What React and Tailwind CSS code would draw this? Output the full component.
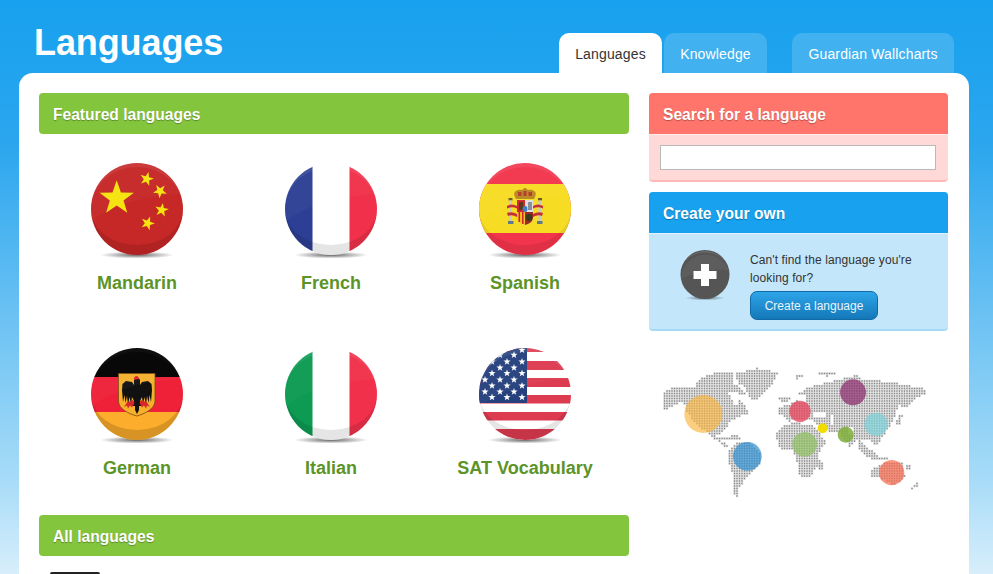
import React from 'react';

const font = { fontFamily: '"Liberation Sans", Arial, sans-serif' };

// 5 pointed star centred on cx,cy
const starPoints = (cx, cy, r, rot = 0) => {
  const pts = [];
  for (let i = 0; i < 10; i++) {
    const rad = i % 2 === 0 ? r : r * 0.4;
    const a = ((-90 + rot + i * 36) * Math.PI) / 180;
    pts.push(`${(cx + rad * Math.cos(a)).toFixed(2)},${(cy + rad * Math.sin(a)).toFixed(2)}`);
  }
  return pts.join(' ');
};

// Round badge: shadow, clipped flag, rims and gloss
const Badge = ({ id, bottomRim = 'rgba(0,0,0,.1)', topRim = 0.07, children }) => (
  <svg width="100" height="98" viewBox="-4 0 100 98" className="block">
    <defs>
      <clipPath id={id}>
        <circle cx="46" cy="46" r="46" />
      </clipPath>
      <radialGradient id={`${id}-s`}>
        <stop offset="0%" stopColor="#000" stopOpacity=".6" />
        <stop offset="100%" stopColor="#000" stopOpacity="0" />
      </radialGradient>
    </defs>
    <ellipse cx="46" cy="92" rx="37" ry="3.5" fill={`url(#${id}-s)`} />
    <g clipPath={`url(#${id})`}>
      {children}
      <path d="M-2 60 C 18 44 52 32 94 31 L94 -2 L-2 -2 Z" fill="#fff" opacity=".03" />
      <path d="M0 46 A46 46 0 0 1 92 46 A46 42 0 0 0 0 46 Z" fill="#fff" opacity={topRim} />
      <path d="M0 46 A46 46 0 0 0 92 46 A46 36 0 0 1 0 46 Z" fill={bottomRim} />
    </g>
  </svg>
);

const China = () => (
  <Badge id="cn">
    <rect width="92" height="92" fill="#c62727" />
    <polygon points={starPoints(25.7, 35.3, 18)} fill="#f6e30c" />
    <polygon points={starPoints(55.7, 16, 7.2, 15)} fill="#f6e30c" />
    <polygon points={starPoints(69, 28, 7.2, 40)} fill="#f6e30c" />
    <polygon points={starPoints(70.7, 47, 7.2, 10)} fill="#f6e30c" />
    <polygon points={starPoints(56.7, 60.3, 7.2, 20)} fill="#f6e30c" />
  </Badge>
);

const France = () => (
  <Badge id="fr">
    <rect width="92" height="92" fill="#fff" />
    <rect width="27.5" height="92" fill="#2d3f94" />
    <rect x="64.5" width="27.5" height="92" fill="#f1314b" />
  </Badge>
);

const Spain = () => (
  <Badge id="es" bottomRim="rgba(0,0,0,.07)">
    <rect width="92" height="92" fill="#f2344c" />
    <rect y="21" width="92" height="49" fill="#f7dc24" />
    {/* crest */}
    <g transform="translate(28 25)">
      <path d="M8 9 C5 3 11 1 15 2 C16 1 17 1 17 0 H19 C19 1 20 1 21 2 C25 1 31 3 28 9 L27 11 H9 Z" fill="#b8871f" />
      <path d="M11 4 h3.5 v4 h-3.5z M16.5 3 h3 v5 h-3z M21.5 4 h3.5 v4 h-3.5z" fill="#b33a2a" />
      <rect x="1.5" y="10" width="4" height="2.5" fill="#6b5a2a" />
      <rect x="2" y="12.5" width="3" height="21" fill="#c9c9c9" />
      <rect x="31" y="10" width="4" height="2.5" fill="#6b5a2a" />
      <rect x="31.5" y="12.5" width="3" height="21" fill="#c9c9c9" />
      <rect x="1" y="33" width="5.5" height="3" fill="#5f7a8c" />
      <rect x="30" y="33" width="5.5" height="3" fill="#5f7a8c" />
      <path d="M0 18 Q5 15 10 18 L10 20.5 Q5 18 0 20.5 Z M0 25 Q5 23 10 26 L10 29 Q5 26 1 28 Z" fill="#c62f36" />
      <path d="M26 18 Q31 15 36 18 L36 20.5 Q31 18 26 20.5 Z M26 26 Q31 23 36 25 L35 28 Q31 26 26 29 Z" fill="#c62f36" />
      <path d="M10 12 H26 V29 C26 34 22 36 18 37 C14 36 10 34 10 29 Z" fill="#e0e0e0" />
      <path d="M10 12 H18 V24 H10 Z" fill="#d0272f" />
      <rect x="12" y="14" width="4" height="8" fill="#5a3a1a" />
      <path d="M21 14 h4 v8 h-4z" fill="#8a8f99" />
      <path d="M10 24 H18 V37 C14 36 10 34 10 29 Z" fill="#f3c21c" />
      <path d="M11.5 24 h1.6 v10 h-1.6z M15 24 h1.6 v12 h-1.6z" fill="#d0272f" />
      <path d="M18 24 H26 V29 C26 34 22 36 18 37 Z" fill="#9c2a1f" />
      <circle cx="22" cy="29.5" r="3.4" fill="#3a3a1e" />
      <ellipse cx="18" cy="21" rx="2.4" ry="3" fill="#3f7fc7" />
    </g>
  </Badge>
);

// Left half of the eagle, mirrored around x=46
const EagleHalf = () => (
  <>
    <path d="M46 30 C44 30 42.5 31.5 43 34 L43 37 L41 34 L35 33 L31.5 36 L31 42 L32 54 L33.5 47 L34.5 55 L36 48 L37 57 L38.5 49 L40 56 L41 49 L43 53 L41.5 58 L44 58 L44 62 L46 66 Z" fill="#111" />
    <path d="M42 52 L36 54.5 L33 59 L36 57.5 L37 60.5 L39 57.5 L41 59.5 L43.5 55 Z" fill="#d6262c" />
  </>
);

const Germany = () => (
  <Badge id="de" topRim={0.03} bottomRim="rgba(0,0,0,.14)">
    <rect width="92" height="29" fill="#000" />
    <rect y="29" width="92" height="35" fill="#ef2138" />
    <rect y="64" width="92" height="28" fill="#fbad2b" />
    {/* shield */}
    <path d="M27.5 25.5 H64 V53 C64 61 53 66 46 68 C38 66 27.5 61 27.5 53 Z" fill="#f6b02c" stroke="#7a4a10" strokeWidth=".8" />
    <EagleHalf />
    <g transform="translate(92 0) scale(-1 1)">
      <EagleHalf />
    </g>
    <path d="M46 28 C44 28 42.5 29.5 43 32 L48 31 C48 29.5 47 28.5 46 28 Z" fill="#d6262c" />
  </Badge>
);

const Italy = () => (
  <Badge id="it">
    <rect width="92" height="92" fill="#fff" />
    <rect width="27.5" height="92" fill="#0d9a52" />
    <rect x="64.5" width="27.5" height="92" fill="#f1314b" />
  </Badge>
);

const stripes = [
  [0, 4], [13, 9], [30, 9], [47, 8.5], [64, 8.5], [81, 11],
];
const usStars = [
  [43, 2], [21, 7], [35, 7], [13, 13.7], [28, 13.7], [43, 13.7],
  [21, 19.7], [35, 19.7], [13, 25.3], [28, 25.3], [43, 25.3],
  [6, 31.7], [21, 31.7], [35, 31.7], [13, 37.7], [28, 37.7], [43, 37.7],
  [6, 43.7], [21, 43.7], [35, 43.7], [13, 49.3], [28, 49.3], [43, 49.3],
];

const Usa = () => (
  <Badge id="us">
    <rect width="92" height="92" fill="#fff" />
    {stripes.map(([y, h]) => (
      <rect key={y} y={y} width="92" height={h} fill="#dd3b50" />
    ))}
    <rect width="48" height="55" fill="#25407c" />
    {usStars.map(([x, y]) => (
      <polygon key={`${x}-${y}`} points={starPoints(x, y, 3.8)} fill="#fff" />
    ))}
  </Badge>
);

const featured = [
  { name: 'Mandarin', flag: <China /> },
  { name: 'French', flag: <France /> },
  { name: 'Spanish', flag: <Spain /> },
  { name: 'German', flag: <Germany /> },
  { name: 'Italian', flag: <Italy /> },
  { name: 'SAT Vocabulary', flag: <Usa /> },
];

// continents, in 3x map coordinates
const parse = (s) => s.split(' ').map((p) => p.split(',').map(Number));
const land = [
  '42,125 70,112 130,115 150,85 205,65 250,65 252,100 285,125 292,130 275,135 262,140 285,165 295,190 270,200 240,215 225,240 195,262 235,285 240,300 215,285 175,250 140,225 110,185 100,155 42,180',
  '255,70 320,55 385,68 370,100 345,125 320,152 302,152 290,120 262,95',
  '200,266 262,255 272,268 215,272',
  '235,300 260,280 300,280 335,310 330,345 290,380 265,420 268,442 248,435 250,380 235,330',
  '388,145 420,145 415,155 395,155',
  '378,250 400,225 440,218 490,228 510,250 528,280 505,310 510,340 480,380 450,382 440,330 430,300 385,295',
  '510,335 525,335 515,365 506,360',
  '445,130 480,110 540,95 620,75 640,90 720,95 820,115 830,130 790,150 770,175 745,165 730,210 700,260 680,285 650,265 625,270 600,290 570,250 520,240 490,212 440,208 420,215 385,190 390,170 415,165 440,150',
  '620,265 650,290 690,320 740,330 650,325 625,295',
  '745,195 760,190 750,225 738,222',
  '665,360 700,340 760,335 765,385 730,405 690,385 665,385',
  '785,410 805,390 808,405 785,417',
  '440,75 470,75 440,90',
  '505,70 560,70 530,80',
  '770,348 785,348 785,358 770,358',
].map(parse);
const lakes = [
  '235,125 265,125 268,165 250,160',
  '490,190 525,190 525,205 490,205',
  '540,195 552,195 552,225 540,225',
  '595,235 612,235 612,255 595,255',
  '430,125 470,140 465,160 440,150',
].map(parse);

const inside = (poly, x, y) => {
  let hit = false;
  for (let i = 0, j = poly.length - 1; i < poly.length; j = i++) {
    const [xi, yi] = poly[i];
    const [xj, yj] = poly[j];
    if (yi > y !== yj > y && x < ((xj - xi) * (y - yi)) / (yj - yi) + xi) hit = !hit;
  }
  return hit;
};

// dot matrix: a pale cell with a dark dot in it
const buildDots = () => {
  let cells = '';
  let dots = '';
  for (let y = 52; y < 445; y += 7.5) {
    for (let x = 40; x < 835; x += 7.5) {
      const cx = x + 3.75;
      const cy = y + 3.75;
      if (land.some((p) => inside(p, cx, cy)) && !lakes.some((p) => inside(p, cx, cy))) {
        cells += `M${x} ${y}h7.5v7.5h-7.5z`;
        dots += `M${x + 1.5} ${y + 1.5}h4v4h-4z`;
      }
    }
  }
  return { cells, dots };
};
const { cells, dots } = buildDots();

const bubbles = [
  [160, 192, 57, '#fbb63c', 0.65],
  [292, 319, 43, '#2c8ed0', 0.7],
  [450, 184, 32, '#e8405a', 0.75],
  [518, 235, 15, '#f2dc00', 1],
  [464, 283, 37, '#8dbf60', 0.7],
  [587, 254, 24, '#7eae3a', 0.85],
  [609, 127, 39, '#8d3271', 0.75],
  [678, 223, 35, '#80d2da', 0.75],
  [725, 368, 38, '#f9694f', 0.7],
];

const WorldMap = () => (
  <svg width="290" height="160" viewBox="0 0 870 480" className="block">
    <path d={cells} fill="#e6e6e6" />
    <path d={dots} fill="#858585" />
    {bubbles.map(([cx, cy, r, fill, opacity]) => (
      <circle key={cx} cx={cx} cy={cy} r={r} fill={fill} opacity={opacity} />
    ))}
  </svg>
);

const PlusBadge = () => (
  <svg width="52" height="52" viewBox="0 0 52 52" className="block">
    <defs>
      <radialGradient id="plus-s">
        <stop offset="0%" stopColor="#000" stopOpacity=".5" />
        <stop offset="100%" stopColor="#000" stopOpacity="0" />
      </radialGradient>
    </defs>
    <ellipse cx="26" cy="48" rx="20" ry="2.5" fill="url(#plus-s)" />
    <circle cx="26" cy="24.5" r="24.5" fill="#555" />
    <path d="M2 30 C 14 22 32 18 50 20 A25 25 0 0 0 2 30 Z" fill="#fff" opacity=".05" />
    <path d="M6 11 A25 25 0 0 1 46 11 A26 24 0 0 0 6 11 Z" fill="#fff" opacity=".15" />
    <path d="M22 14 H30 V21 H37.5 V29 H30 V36 H22 V29 H14.5 V21 H22 Z" fill="#fff" />
  </svg>
);

const headerText = 'pl-[14px] pt-[2px] flex items-center text-white font-bold text-[15.6px] [text-shadow:0_1px_1px_rgba(0,0,0,0.3)]';

const SectionBar = ({ children }) => (
  <div className={`h-[41px] bg-[#84c53e] rounded-[4px] ${headerText}`}>{children}</div>
);

const tabClass = 'h-[40px] pt-[2px] rounded-t-[10px] flex items-center justify-center text-[14px] tracking-[0.15px]';

export default function App() {
  return (
    <div
      className="h-screen overflow-hidden bg-[linear-gradient(180deg,#17a1ee_0%,#2ba6ee_25%,#a8dcf8_84%,#d8eefb_100%)]"
      style={font}
    >
      {/* header */}
      <div className="h-[73px] flex items-end pl-[34px]">
        <h1 className="text-white font-bold text-[36px] leading-[40px] tracking-[-0.1px] mb-[10px] w-[525px]">Languages</h1>
        <div className={`${tabClass} w-[103px] bg-white text-[#333]`}>Languages</div>
        <div className={`${tabClass} w-[103px] ml-[2px] bg-[#42b1f0] text-white`}>Knowledge</div>
        <div className={`${tabClass} w-[162px] ml-[25px] bg-[#42b1f0] text-white`}>Guardian Wallcharts</div>
      </div>

      {/* panel */}
      <div className="ml-[19px] w-[950px] h-[501px] bg-white rounded-t-[14px] pt-[20px] px-[20px] flex gap-[20px] overflow-hidden">
        <div className="w-[590px] shrink-0">
          <SectionBar>Featured languages</SectionBar>
          <div className="grid grid-cols-[194px_194px_194px] pt-[29px] pl-[1px]">
            {featured.map(({ name, flag }) => (
              <div key={name} className="h-[185px] flex flex-col items-center">
                {flag}
                <div className="mt-[11px] text-[18px] leading-[22px] font-bold text-[#5c9427]">{name}</div>
              </div>
            ))}
          </div>
          <div className="mt-[-18px]">
            <SectionBar>All languages</SectionBar>
          </div>
          <div className="mt-[16px] ml-[11px] w-[50px] h-[4px] bg-[#222] rounded-t-[2px]" />
        </div>

        <div className="w-[299px] shrink-0">
          {/* search */}
          <div className="rounded-[4px] overflow-hidden bg-[#ffd9d8] border-b-2 border-[#ffbab7]">
            <div className={`h-[41px] bg-[#ff746b] ${headerText}`}>Search for a language</div>
            <div className="border-t border-[#ffeeee] pt-[10px] pb-[10px] px-[11px]">
              <input className="block w-[276px] h-[25px] bg-white border border-[#b9b9b9]" />
            </div>
          </div>

          {/* create */}
          <div className="mt-[10px] rounded-[4px] overflow-hidden bg-[#c3e6fa] border-b-2 border-[#a5daf6]">
            <div className={`h-[41px] bg-[#17a1ee] ${headerText}`}>Create your own</div>
            <div className="h-[96px] border-t border-[#e2f3fd] flex pl-[30px]">
              <div className="pt-[16px] w-[71px] shrink-0">
                <PlusBadge />
              </div>
              <div className="pt-[17px]">
                <p className="text-[12px] leading-[18px] tracking-[0.1px] text-[#333]">
                  Can't find the language you're
                  <br />
                  looking for?
                </p>
                <button className="mt-[4px] block w-[128px] h-[29px] rounded-[7px] border border-[#0f6ba5] bg-[linear-gradient(180deg,#2ea5ea,#1478b8)] text-[12px] text-[#e8f5fd]">
                  Create a language
                </button>
              </div>
            </div>
          </div>

          {/* map */}
          <div className="mt-[19px] ml-[1px]">
            <WorldMap />
          </div>
        </div>
      </div>
    </div>
  );
}
